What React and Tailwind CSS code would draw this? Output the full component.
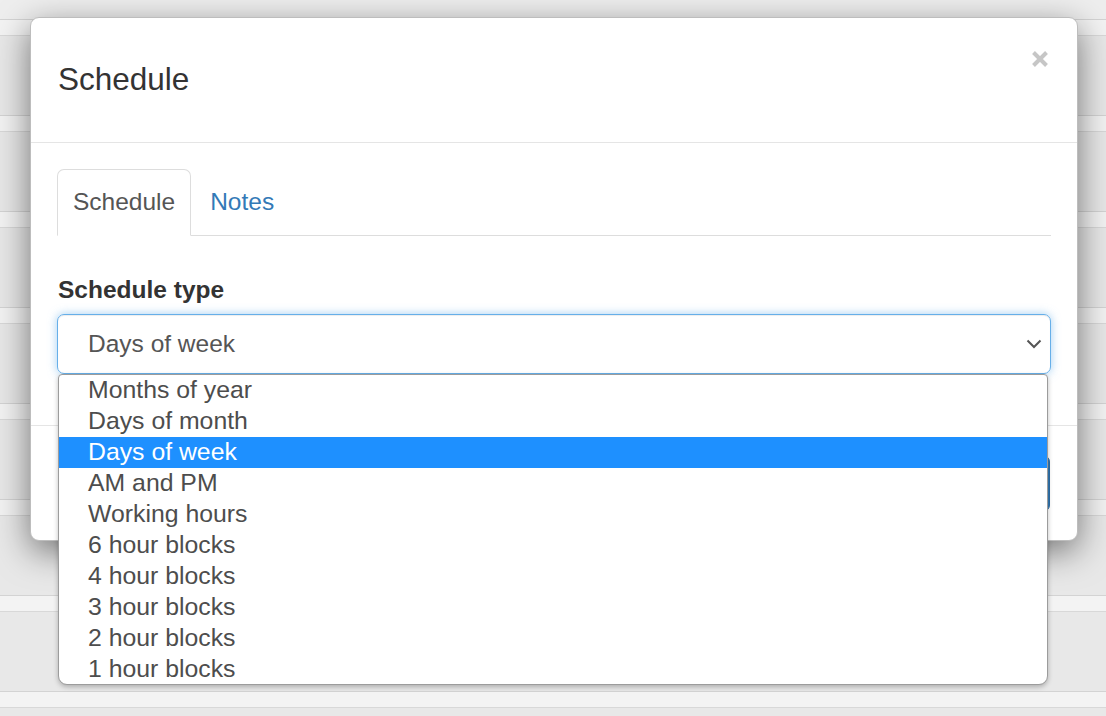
import { useState } from 'react';

const options = [
  'Months of year',
  'Days of month',
  'Days of week',
  'AM and PM',
  'Working hours',
  '6 hour blocks',
  '4 hour blocks',
  '3 hour blocks',
  '2 hour blocks',
  '1 hour blocks',
];

function BackgroundRows() {
  const rows = [0, 1, 2, 3, 4, 5, 6, 7];
  return (
    <div className="flex flex-col pt-[19px]">
      {rows.map((r) => (
        <div key={r} className="flex flex-col">
          <div className="h-px bg-[#d3d3d3]" />
          <div className="h-[15px] bg-[#f3f3f3]" />
          <div className="h-px bg-[#d8d8d8]" />
          <div className="h-[79px] bg-[#e8e8e8]" />
        </div>
      ))}
    </div>
  );
}

export default function App() {
  const [selected] = useState('Days of week');

  return (
    <div className="relative w-[1106px] h-[716px] overflow-hidden bg-[#eeeeee] font-['Liberation_Sans',Arial,sans-serif]">
      <BackgroundRows />

      {/* Modal */}
      <div className="absolute left-[30px] top-[17px] w-[1048px] h-[524px] bg-white border border-[#bdbdbd] rounded-[9px] shadow-[0_10px_34px_rgba(0,0,0,0.5)] flex flex-col">
        <div className="h-[125px] border-b border-[#e5e5e5] flex items-start justify-between pl-[27px] pr-[28px]">
          <h4 className="self-center text-[31.5px] leading-none text-[#333]">Schedule</h4>
          <button className="mt-[32px]" aria-label="Close">
            <svg width="18" height="18" viewBox="0 0 18 18">
              <path d="M2.5 2.5 L15.5 15.5 M15.5 2.5 L2.5 15.5" stroke="#c6c6c6" strokeWidth="4" />
            </svg>
          </button>
        </div>

        <div className="px-[26px] pt-[26px] pb-[51px]">
          <ul className="flex border-b border-[#dddddd]">
            <li className="h-[67px] -mb-px px-[15px] flex items-center bg-white border border-[#dddddd] border-b-transparent rounded-t-[7px] text-[24.5px] text-[#555]">
              Schedule
            </li>
            <li className="h-[67px] -mb-px ml-[3px] px-[15px] flex items-center border border-transparent text-[24.5px] text-[#337ab7]">
              Notes
            </li>
          </ul>

          <label className="block mt-[36px] mb-[7px] text-[24.5px] leading-[35px] font-bold text-[#333] pl-px">
            Schedule type
          </label>
          <div className="h-[60px] border border-[#66afe9] rounded-[7px] shadow-[inset_0_1px_1px_rgba(0,0,0,0.075),0_0_10px_rgba(102,175,233,0.6)] flex items-center justify-between pl-[30px] pr-[7px] text-[24.5px] text-[#555]">
            <span>{selected}</span>
            <svg width="16" height="10" viewBox="0 0 16 10" className="mr-[1px]">
              <path d="M1.5 1.5 L8 8 L14.5 1.5" fill="none" stroke="#555" strokeWidth="2" />
            </svg>
          </div>
        </div>

        <div className="border-t border-[#e5e5e5] flex justify-end pt-[29px] pb-[28px] pr-[27px]">
          <button className="h-[57px] w-[120px] rounded-[7px] bg-[#337ab7] border border-[#2e6da4] text-white text-[24.5px]">
            Save
          </button>
        </div>
      </div>

      {/* Open select list */}
      <ul className="absolute left-[58px] top-[374px] w-[990px] h-[311px] bg-white border border-[#9c9c9c] rounded-t-[4px] rounded-b-[9px] shadow-[0_2px_5px_rgba(0,0,0,0.25)] overflow-hidden">
        {options.map((o) => (
          <li
            key={o}
            className={
              o === selected
                ? 'h-[31px] leading-[29px] pl-[29px] text-[24.8px] bg-[#1e90ff] text-white'
                : 'h-[31px] leading-[29px] pl-[29px] text-[24.8px] text-[#4d4d4d]'
            }
          >
            {o}
          </li>
        ))}
      </ul>
    </div>
  );
}
